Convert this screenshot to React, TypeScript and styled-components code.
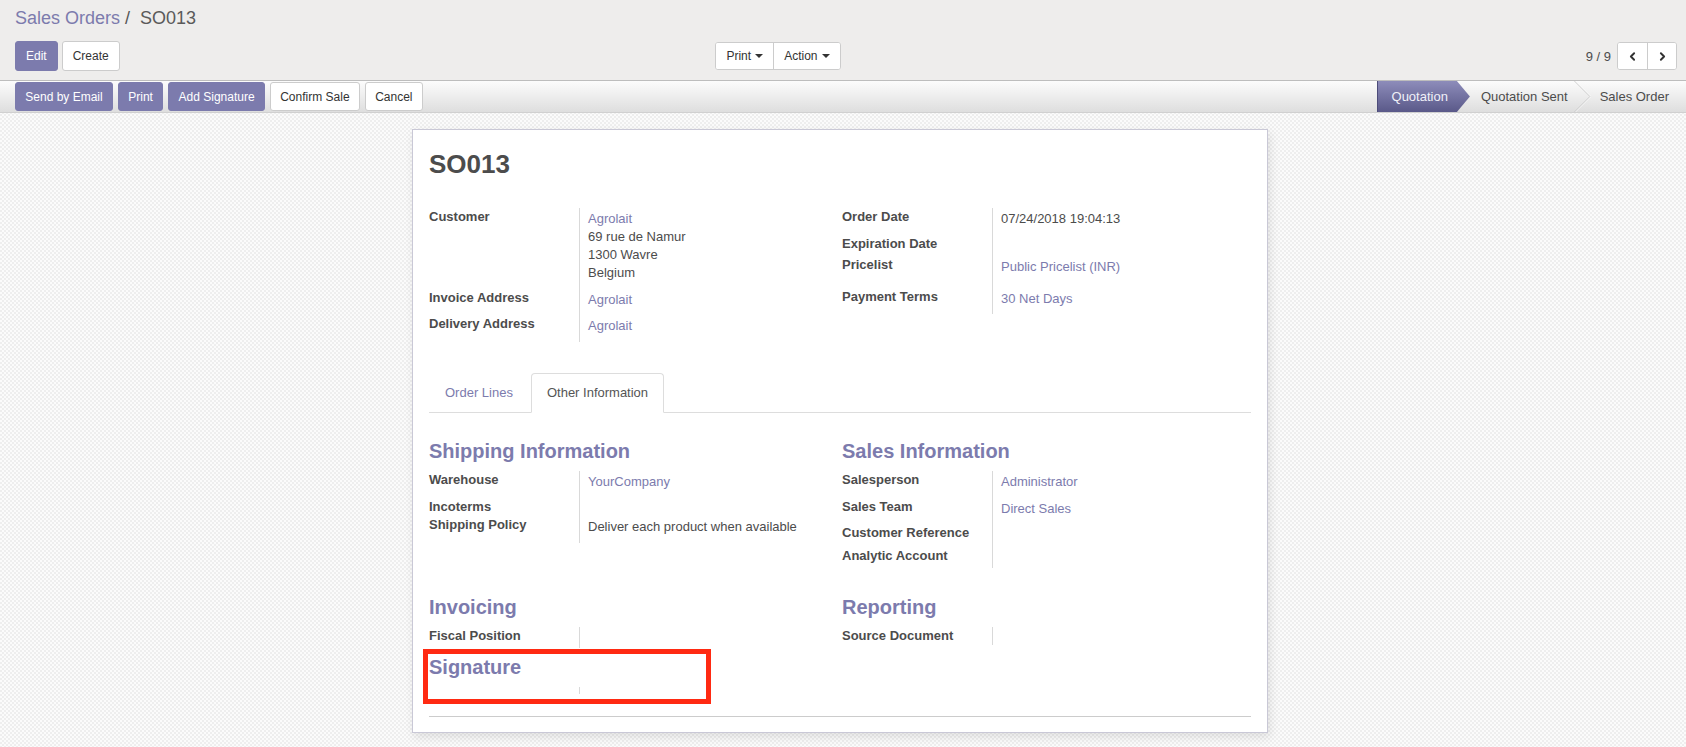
import React from "react";
import styled, { createGlobalStyle, css } from "styled-components";
import { ChevronLeft, ChevronRight } from "lucide-react";

const PURPLE = "#7c7bad";
const TEXT = "#4c4c4c";

const GlobalStyle = createGlobalStyle`
  html, body {
    margin: 0;
    padding: 0;
  }
  body {
    font-family: "Liberation Sans", Helvetica, Arial, sans-serif;
    font-size: 13px;
    color: ${TEXT};
    background-color: #f6f6f6;
  }
  * {
    box-sizing: border-box;
  }
`;

const Link = styled.span`
  color: ${PURPLE};
`;

type Field = { label?: string; value?: React.ReactNode; link?: boolean; h: number };

const headerFields: Field[] = [
  {
    label: "Customer",
    h: 81,
    value: (
      <>
        <Link>Agrolait</Link>
        <br />
        69 rue de Namur
        <br />
        1300 Wavre
        <br />
        Belgium
      </>
    ),
  },
  { label: "Invoice Address", value: "Agrolait", link: true, h: 26 },
  { label: "Delivery Address", value: "Agrolait", link: true, h: 27 },
];

const dateFields: Field[] = [
  { label: "Order Date", value: "07/24/2018 19:04:13", h: 27 },
  { label: "Expiration Date", h: 21 },
  { label: "Pricelist", value: "Public Pricelist (INR)", link: true, h: 32 },
  { label: "Payment Terms", value: "30 Net Days", link: true, h: 26 },
];

const sections: { title: string; top: number; fields: Field[]; marked?: boolean; span?: boolean }[] = [
  {
    title: "Shipping Information",
    top: 26,
    fields: [
      { label: "Warehouse", value: "YourCompany", link: true, h: 27 },
      { label: "Incoterms", h: 18 },
      { label: "Shipping Policy", value: "Deliver each product when available", h: 27 },
    ],
  },
  {
    title: "Sales Information",
    top: 26,
    fields: [
      { label: "Salesperson", value: "Administrator", link: true, h: 27 },
      { label: "Sales Team", value: "Direct Sales", link: true, h: 26 },
      { label: "Customer Reference", h: 23 },
      { label: "Analytic Account", h: 21 },
    ],
  },
  { title: "Invoicing", top: 27, fields: [{ label: "Fiscal Position", h: 21 }] },
  { title: "Reporting", top: 27, fields: [{ label: "Source Document", h: 18 }] },
  { title: "Signature", top: 7, fields: [{ h: 7 }], marked: true, span: true },
];

function FieldRows({ fields }: { fields: Field[] }) {
  return (
    <>
      {fields.map((f, i) => (
        <FieldRow key={i} $h={f.h}>
          <FieldLabel>{f.label}</FieldLabel>
          <FieldValue>{f.link ? <Link>{f.value}</Link> : f.value}</FieldValue>
        </FieldRow>
      ))}
    </>
  );
}

export default function App() {
  return (
    <Page>
      <GlobalStyle />
      <ControlPanel>
        <Breadcrumbs>
          <Link>Sales Orders</Link>
          <CrumbSep>/</CrumbSep>
          <CrumbCurrent>SO013</CrumbCurrent>
        </Breadcrumbs>
        <CpRow>
          <CpLeft>
            <ButtonRow>
              <Button $primary>Edit</Button>
              <Button>Create</Button>
            </ButtonRow>
            <ButtonGroup>
              <GroupButton>
                Print <Caret />
              </GroupButton>
              <GroupButton>
                Action <Caret />
              </GroupButton>
            </ButtonGroup>
          </CpLeft>
          <CpRight>
            <PagerValue>9 / 9</PagerValue>
            <ButtonGroup>
              <PagerButton aria-label="Previous">
                <ChevronLeft size={13} strokeWidth={3.5} />
              </PagerButton>
              <PagerButton aria-label="Next">
                <ChevronRight size={13} strokeWidth={3.5} />
              </PagerButton>
            </ButtonGroup>
          </CpRight>
        </CpRow>
      </ControlPanel>

      <Statusbar>
        <ButtonRow $gap={5}>
          <Button $primary $small>Send by Email</Button>
          <Button $primary $small>Print</Button>
          <Button $primary $small>Add Signature</Button>
          <Button $small>Confirm Sale</Button>
          <Button $small>Cancel</Button>
        </ButtonRow>
        <Steps>
          <Step $active>Quotation</Step>
          <Step $padLeft={11} $padRight={6}>
            Quotation Sent
          </Step>
          <StepChevron width="17" height="31" viewBox="0 0 17 31">
            <polyline points="0.5,0 16,15.5 0.5,31" fill="none" stroke="#c6c6c6" strokeWidth="1" />
            <polyline points="1.5,0 17,15.5 1.5,31" fill="none" stroke="#ffffff" strokeWidth="1" opacity="0.7" />
          </StepChevron>
          <Step $padLeft={9} $padRight={14}>
            Sales Order
          </Step>
        </Steps>
      </Statusbar>

      <Content>
        <Sheet>
          <Title>SO013</Title>
          <Columns>
            <Group>
              <FieldRows fields={headerFields} />
            </Group>
            <Group>
              <FieldRows fields={dateFields} />
            </Group>
          </Columns>

          <TabNav>
            <Tab>Order Lines</Tab>
            <Tab $active>Other Information</Tab>
          </TabNav>

          <Columns>
            {sections.map((s) => (
              <Section key={s.title} $top={s.top} $span={s.span}>
                <SectionTitle>{s.title}</SectionTitle>
                <Group>
                  <FieldRows fields={s.fields} />
                </Group>
                {s.marked && <Highlight />}
              </Section>
            ))}
          </Columns>

          <BottomRule />
        </Sheet>
      </Content>
    </Page>
  );
}

const Page = styled.div`
  min-height: 100vh;
  display: flex;
  flex-direction: column;
  background-color: #f7f7f7;
  background-image: repeating-conic-gradient(#eeeeee 0 25%, #fbfbfb 0 50%);
  background-size: 4px 4px;
`;

const ControlPanel = styled.div`
  background: #eeedec;
  border-bottom: 1px solid #bdbdbd;
  padding: 0 9px 9px 15px;
`;

const Breadcrumbs = styled.div`
  height: 36px;
  line-height: 36px;
  font-size: 18px;
  display: flex;
  align-items: center;
`;

const CrumbSep = styled.span`
  color: #555;
  margin: 0 10px 0 5px;
`;

const CrumbCurrent = styled.span`
  color: #5a5a5a;
`;

const CpRow = styled.div`
  display: flex;
  align-items: center;
  margin-top: 5px;
  height: 30px;
`;

const CpLeft = styled.div`
  flex: 1;
  display: flex;
  align-items: center;
  justify-content: space-between;
  padding-right: 11px;
`;

const CpRight = styled.div`
  flex: 1;
  display: flex;
  align-items: center;
  justify-content: flex-end;
`;

const ButtonRow = styled.div<{ $gap?: number }>`
  display: flex;
  align-items: center;
  gap: ${(p) => p.$gap ?? 4}px;
`;

const Button = styled.button<{ $primary?: boolean; $small?: boolean }>`
  font-family: inherit;
  font-size: 12px;
  height: ${(p) => (p.$small ? 29 : 30)}px;
  padding: 0 ${(p) => (p.$small ? 9.3 : 10)}px;
  border-radius: 3px;
  border: 1px solid #cccccc;
  background: #ffffff;
  color: #333333;
  cursor: pointer;
  ${(p) =>
    p.$primary &&
    css`
      background: ${PURPLE};
      border-color: ${PURPLE};
      color: #ffffff;
    `}
`;

const ButtonGroup = styled.div`
  display: flex;
  border: 1px solid #cccccc;
  border-radius: 3px;
  background: #ffffff;
  height: 28px;
  overflow: hidden;
`;

const GroupButton = styled.button`
  font-family: inherit;
  font-size: 12px;
  color: #333333;
  background: #ffffff;
  border: none;
  padding: 0 10px;
  display: flex;
  align-items: center;
  gap: 4px;
  & + & {
    border-left: 1px solid #cccccc;
  }
`;

const Caret = styled.span`
  display: inline-block;
  width: 0;
  height: 0;
  border-top: 4px solid #333333;
  border-left: 4px solid transparent;
  border-right: 4px solid transparent;
`;

const PagerValue = styled.span`
  font-size: 13px;
  color: #4c4c4c;
  margin-right: 6px;
`;

const PagerButton = styled.button`
  width: 29px;
  border: none;
  background: #ffffff;
  color: #333333;
  display: flex;
  align-items: center;
  justify-content: center;
  padding: 0;
  & + & {
    border-left: 1px solid #cccccc;
  }
`;

const Statusbar = styled.div`
  height: 32px;
  display: flex;
  align-items: center;
  justify-content: space-between;
  padding-left: 15px;
  background: linear-gradient(#fcfcfc, #dedede);
  border-bottom: 1px solid #d0d0d0;
`;

const Steps = styled.div`
  display: flex;
  align-self: stretch;
  margin-right: 3px;
`;

const Step = styled.div<{ $active?: boolean; $padLeft?: number; $padRight?: number }>`
  display: flex;
  align-items: center;
  font-size: 13px;
  color: #4c4c4c;
  padding: 0 ${(p) => p.$padRight ?? 22}px 0 ${(p) => p.$padLeft ?? 15}px;
  ${(p) =>
    p.$active &&
    css`
      color: #f0f0f8;
      background: linear-gradient(#8d8cba, #5a5989);
      clip-path: polygon(0 0, calc(100% - 13px) 0, 100% 50%, calc(100% - 13px) 100%, 0 100%);
      box-shadow: inset 1px 0 0 #4d4c7a;
    `}
`;

const StepChevron = styled.svg`
  display: block;
  align-self: stretch;
  flex-shrink: 0;
`;

const Content = styled.div`
  display: flex;
  justify-content: center;
  padding: 16px 6px 15px 0;
`;

const Sheet = styled.div`
  width: 856px;
  background: #ffffff;
  border: 1px solid #c9c8d6;
  box-shadow: 2px 4px 9px rgba(0, 0, 0, 0.1);
  padding: 20px 16px 15px 16px;
`;

const Title = styled.h1`
  margin: 0 0 29px;
  font-size: 26px;
  line-height: 29px;
  font-weight: bold;
  color: #4c4c4c;
`;

const Columns = styled.div`
  display: grid;
  grid-template-columns: 413px 1fr;
  align-items: start;
`;

const Group = styled.div`
  display: flex;
  flex-direction: column;
`;

const FieldRow = styled.div<{ $h: number }>`
  display: flex;
  height: ${(p) => p.$h}px;
`;

const FieldLabel = styled.div`
  width: 151px;
  flex-shrink: 0;
  border-right: 1px solid #d9d9d9;
  font-weight: bold;
  line-height: 18px;
  color: #4c4c4c;
`;

const FieldValue = styled.div`
  padding: 2px 0 0 8px;
  line-height: 18px;
  white-space: nowrap;
`;

const TabNav = styled.div`
  display: flex;
  margin-top: 31px;
  border-bottom: 1px solid #dddddd;
`;

const Tab = styled.div<{ $active?: boolean }>`
  padding: 10px 15px;
  line-height: 18px;
  margin: 0 2px -1px 0;
  border: 1px solid transparent;
  border-radius: 4px 4px 0 0;
  color: ${PURPLE};
  ${(p) =>
    p.$active &&
    css`
      color: #555555;
      background: #ffffff;
      border-color: #dddddd;
      border-bottom-color: #ffffff;
    `}
`;

const Section = styled.div<{ $top: number; $span?: boolean }>`
  position: relative;
  margin-top: ${(p) => p.$top}px;
  grid-column: ${(p) => (p.$span ? "1 / 2" : "auto")};
`;

const SectionTitle = styled.div`
  font-size: 20px;
  line-height: 24px;
  font-weight: bold;
  color: ${PURPLE};
  margin-bottom: 8px;
`;

const Highlight = styled.div`
  position: absolute;
  top: -6px;
  left: -6px;
  width: 288px;
  height: 55px;
  border: 5px solid #ff2a12;
  pointer-events: none;
`;

const BottomRule = styled.div`
  margin-top: 22px;
  border-top: 1px solid #cccccc;
`;
